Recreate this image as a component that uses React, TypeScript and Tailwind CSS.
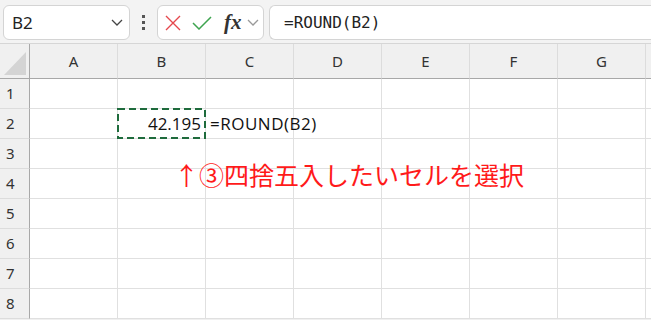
import React from "react";

const COLS = ["A", "B", "C", "D", "E", "F", "G"];
const ROWS = [1, 2, 3, 4, 5, 6, 7, 8];

const ui = { fontFamily: '"Noto Sans", "Open Sans", sans-serif' };
const cell = { fontFamily: '"Open Sans", "Noto Sans CJK JP", sans-serif' };
const jp = { fontFamily: '"Noto Sans CJK JP", "Noto Sans", sans-serif' };

function Chevron({ className }: { className?: string }) {
  return (
    <svg viewBox="0 0 12 7" className={className} fill="none">
      <path d="M1 1 L6 6 L11 1" stroke="currentColor" strokeWidth="1.3" />
    </svg>
  );
}

export default function App() {
  return (
    <div className="w-[651px] h-[320px] overflow-hidden bg-[#f0f0f0] relative" style={ui}>
      {/* formula bar */}
      <div className="h-[44px] flex items-start pt-[5px] pl-[3px] border-b border-[#d6d6d6] bg-[#f3f3f3]">
        <div className="w-[127px] h-[35px] bg-white border border-[#d4d4d4] rounded-[6px] flex items-center pl-[8px] pr-[6px] justify-between">
          <span className="text-[17px] text-[#222]">B2</span>
          <Chevron className="w-[12px] h-[7px] text-[#444]" />
        </div>
        <div className="w-[27px] h-[35px] flex flex-col items-center justify-center gap-[3px]">
          <span className="w-[3px] h-[3px] bg-[#555]" />
          <span className="w-[3px] h-[3px] bg-[#555]" />
          <span className="w-[3px] h-[3px] bg-[#555]" />
        </div>
        <div className="w-[107px] h-[35px] bg-white border border-[#d4d4d4] rounded-[6px] flex items-center pl-[7px]">
          <svg viewBox="0 0 16 16" className="w-[16px] h-[16px]" fill="none">
            <path d="M1 1 L15 15 M15 1 L1 15" stroke="#e5484d" strokeWidth="1.4" />
          </svg>
          <svg viewBox="0 0 20 14" className="w-[20px] h-[14px] ml-[11px]" fill="none">
            <path d="M1 7 L7 13 L19 1" stroke="#3ea44f" strokeWidth="1.5" />
          </svg>
          <span
            className="ml-[12px] text-[21px] italic font-semibold text-[#333] leading-none"
            style={{ fontFamily: '"Liberation Serif", "DejaVu Serif", serif' }}
          >
            fx
          </span>
          <Chevron className="ml-[5px] w-[12px] h-[7px] text-[#999]" />
        </div>
        <div className="ml-[5px] flex-1 h-[35px] bg-white border border-[#d4d4d4] border-r-0 rounded-l-[6px] flex items-center pl-[14px]">
          <span className="text-[16px] text-[#222]" style={{ fontFamily: '"DejaVu Sans Mono", "Liberation Mono", monospace' }}>
            =ROUND(B2)
          </span>
        </div>
      </div>

      {/* grid */}
      <div className="grid grid-cols-[30px_repeat(7,88px)_1fr] grid-rows-[35px_repeat(8,30px)]">
        <div className="bg-[#f0f0f0] border-r border-b border-[#a8a8a8] relative">
          <svg viewBox="0 0 22 23" className="absolute left-[4px] top-[8px] w-[22px] h-[23px]">
            <path d="M22 0 L22 23 L0 23 Z" fill="#d4d4d4" />
          </svg>
        </div>
        {COLS.map((c) => (
          <div
            key={c}
            className="bg-[#f0f0f0] border-r border-[#dcdcdc] border-b border-b-[#a8a8a8] flex items-center justify-center text-[15px] text-[#333]"
          >
            {c}
          </div>
        ))}
        <div className="bg-[#f0f0f0] border-b border-[#a8a8a8]" />

        {ROWS.map((r) => (
          <React.Fragment key={r}>
            <div className="bg-[#f0f0f0] border-r border-[#a8a8a8] border-b border-b-[#dcdcdc] flex items-center pl-[6px] text-[15px] text-[#333]">
              {r}
            </div>
            {COLS.map((c) => {
              const isB2 = r === 2 && c === "B";
              const isC2 = r === 2 && c === "C";
              return (
                <div
                  key={c}
                  className="bg-white border-r border-b border-[#e0e0e0] relative flex items-center"
                  style={cell}
                >
                  {isB2 && (
                    <>
                      <span className="absolute right-[4px] text-[17px] text-[#111]">42.195</span>
                      <svg className="absolute left-[-1px] top-[-1px] w-[89px] h-[31px]" viewBox="0 0 89 31" fill="none">
                        <rect x="1" y="1" width="87" height="29" stroke="#1e6b3c" strokeWidth="2" strokeDasharray="7 4" />
                      </svg>
                    </>
                  )}
                  {isC2 && (
                    <span className="absolute left-[4px] whitespace-nowrap text-[17px] tracking-[0.5px] text-[#111] z-10">=ROUND(B2)</span>
                  )}
                </div>
              );
            })}
            <div className="bg-white border-b border-[#e0e0e0]" />
          </React.Fragment>
        ))}
      </div>

      {/* annotation */}
      <div
        className="absolute left-[174px] top-[162px] text-[25px] font-normal text-[#ff1a1a] whitespace-nowrap leading-none"
        style={jp}
      >
        ↑③四捨五入したいセルを選択
      </div>
    </div>
  );
}
